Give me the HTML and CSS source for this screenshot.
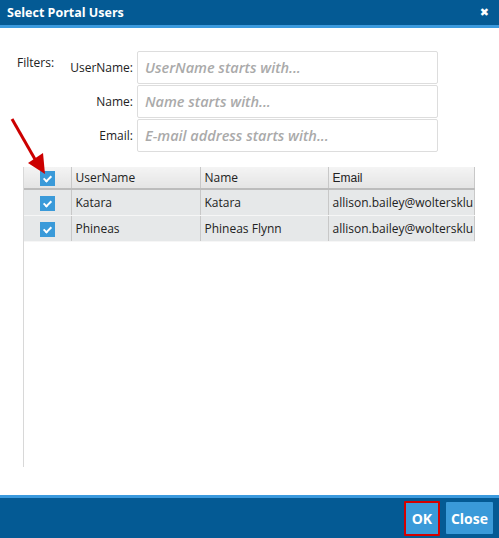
FILE: index.html
```html
<!DOCTYPE html>
<html lang="en">
<head>
  <meta charset="UTF-8">
  <title>Select Portal Users</title>
  <link rel="stylesheet" href="styles.css">
</head>
<body>
  <div class="dialog">
    <div class="titlebar">
      <span class="title">Select Portal Users</span>
      <span class="close-x">&#10006;</span>
    </div>

    <div class="content">
      <div class="filters">
        <div class="filters-label">Filters:</div>
        <div class="filter-grid">
          <label>UserName:</label>
          <input type="text" placeholder="UserName starts with...">
          <label>Name:</label>
          <input type="text" placeholder="Name starts with...">
          <label>Email:</label>
          <input type="text" placeholder="E-mail address starts with...">
        </div>
      </div>

      <div class="grid-wrap">
        <table class="grid">
          <thead>
            <tr>
              <th class="col-check"><span class="check"></span></th>
              <th class="col-user">UserName</th>
              <th class="col-name">Name</th>
              <th class="col-email">Email</th>
            </tr>
          </thead>
          <tbody>
            <tr>
              <td class="col-check"><span class="check"></span></td>
              <td>Katara</td>
              <td>Katara</td>
              <td>allison.bailey@woltersklu</td>
            </tr>
            <tr>
              <td class="col-check"><span class="check"></span></td>
              <td>Phineas</td>
              <td>Phineas Flynn</td>
              <td>allison.bailey@woltersklu</td>
            </tr>
          </tbody>
        </table>
      </div>

      <svg class="pointer" width="40" height="62" viewBox="0 0 40 62">
        <line x1="2" y1="2" x2="26" y2="44" stroke="#c00" stroke-width="3"/>
        <polygon points="18,46 35,57 33,36" fill="#c00"/>
      </svg>
    </div>

    <div class="footer">
      <button class="btn btn-ok">OK</button>
      <button class="btn">Close</button>
    </div>
  </div>
</body>
</html>
```

FILE: styles.css
```css
* { margin: 0; padding: 0; box-sizing: border-box; }
body {
  font-family: "Open Sans", "Noto Sans", sans-serif;
  color: #222;
  background: #fff;
  width: 499px;
  height: 538px;
  overflow: hidden;
}
.dialog {
  display: flex;
  flex-direction: column;
  height: 538px;
}
.titlebar {
  height: 28px;
  background: #045a94;
  border-bottom: 3px solid #3b9ade;
  display: flex;
  align-items: center;
  justify-content: space-between;
  padding: 0 10px 0 7px;
  color: #fff;
}
.title { font-size: 12.5px; font-weight: bold; }
.close-x { font-size: 11px; font-weight: bold; font-family: "DejaVu Sans", sans-serif; }

.content {
  flex: 1;
  position: relative;
  padding: 23px 0 0 0;
}
.filters {
  display: flex;
  padding-left: 17px;
}
.filters-label {
  width: 53px;
  font-size: 12px;
  padding-top: 3px;
}
.filter-grid {
  display: grid;
  grid-template-columns: 63px 301px;
  column-gap: 4px;
  row-gap: 1px;
}
.filter-grid label {
  font-size: 12px;
  text-align: right;
  padding-top: 8px;
}
.filter-grid input {
  height: 33px;
  border: 1px solid #ddd;
  border-radius: 2px;
  padding: 0 7px;
  font-family: "Open Sans", sans-serif;
  font-size: 14.5px;
  outline: none;
}
.filter-grid input::placeholder {
  color: #aaa;
  font-style: italic;
  font-weight: 600;
}

.grid-wrap {
  margin: 15px 0 0 23px;
  width: 452px;
  height: 300px;
  border-left: 1px solid #d8d8d8;
}
.grid {
  border-collapse: collapse;
  width: 451px;
  table-layout: fixed;
  font-size: 12px;
}
.grid th, .grid td {
  text-align: left;
  padding: 0 4px;
  white-space: nowrap;
  overflow: hidden;
  border-right: 1px solid #c8c8c8;
  font-weight: normal;
}
.grid th {
  height: 22px;
  background: linear-gradient(#f4f4f4, #e4e4e4);
  border-bottom: 2px solid #bcbcbc;
}
.grid td {
  height: 26px;
  background: #e6e8e9;
  border-bottom: 1px solid #f6f6f6;
}
.grid .col-check { width: 47px; text-align: center; padding: 0; }
.grid .col-user { width: 129px; }
.grid .col-name { width: 128px; }
.grid .col-email { font-family: "Liberation Sans", Arial, sans-serif; }
.check {
  display: inline-block;
  width: 15px;
  height: 15px;
  background: #3a9ad9;
  position: relative;
  vertical-align: middle;
}
.check::after {
  content: "";
  position: absolute;
  left: 5px;
  top: 3px;
  width: 3px;
  height: 6px;
  border: solid #fff;
  border-width: 0 2px 2px 0;
  transform: rotate(45deg);
}
.pointer {
  position: absolute;
  left: 10px;
  top: 89px;
}

.footer {
  height: 43px;
  background: #045a94;
  border-top: 3px solid #3b9ade;
  display: flex;
  justify-content: flex-end;
  align-items: center;
  gap: 6px;
  padding-right: 6px;
}
.btn {
  background: #3a9ad9;
  color: #fff;
  border: none;
  font-family: "Open Sans", sans-serif;
  font-weight: bold;
  font-size: 14px;
  height: 32px;
  padding: 0 5px;
  border-radius: 1px;
}
.btn-ok {
  height: 35px;
  width: 36px;
  border: 2px solid #d40000;
}
```
